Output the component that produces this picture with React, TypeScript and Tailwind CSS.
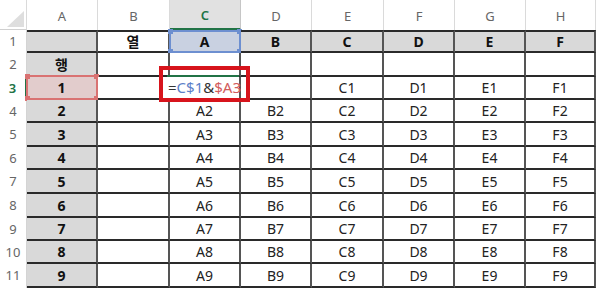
import React from "react";

const COLS = ["A", "B", "C", "D", "E", "F", "G", "H"];
const HEAD = ["열", "A", "B", "C", "D", "E", "F"];

type Cell = { text: string; bold?: boolean; gray?: boolean };

const buildRow = (r: number): Cell[] => {
  if (r === 1)
    return [
      { text: "", gray: true },
      { text: "열", bold: true },
      ...HEAD.slice(1).map((t) => ({ text: t, bold: true, gray: true })),
    ];
  if (r === 2)
    return [
      { text: "행", bold: true, gray: true },
      ...Array.from({ length: 7 }, () => ({ text: "" })),
    ];
  const n = r - 2;
  if (r === 3)
    return [
      { text: "1", bold: true, gray: true },
      { text: "" },
      { text: "" },
      { text: "" },
      { text: "C1" },
      { text: "D1" },
      { text: "E1" },
      { text: "F1" },
    ];
  return [
    { text: String(n), bold: true, gray: true },
    { text: "" },
    ...["A", "B", "C", "D", "E", "F"].map((c) => ({ text: c + n })),
  ];
};

const Handle = ({ pos, color }: { pos: string; color: string }) => (
  <span className={`absolute w-[5px] h-[5px] ${pos} ${color}`} />
);

const App = () => {
  const rows = Array.from({ length: 11 }, (_, i) => i + 1);

  return (
    <div className="relative w-[600px] h-[290px] bg-white overflow-hidden font-['Noto_Sans','Noto_Sans_CJK_KR',sans-serif] text-[14px] text-[#222]">
      <div className="grid grid-cols-[27px_71px_72px_71px_71px_72px_71px_71px_70px_1fr] grid-rows-[30px_23px_24px_23px_23px_24px_23px_24px_24px_23px_23px_24px]">
        {/* --- Column headers --- */}
        <div className="relative border-r border-[#dadada] border-b border-b-[#d0d0d0]">
          <svg className="absolute left-[7px] top-[11px]" width="17" height="16" viewBox="0 0 17 16">
            <polygon points="17,0 17,16 0,16" fill="#dedede" />
          </svg>
        </div>
        {COLS.map((c) => (
          <div
            key={c}
            className={
              c === "C"
                ? "flex items-center justify-center bg-[#e1e1e1] border-r border-[#c6c6c6] border-b-2 border-b-[#217346] text-[13px] text-[#217346] font-semibold pt-[3px]"
                : "flex items-center justify-center border-r border-[#dadada] text-[13px] text-[#666] pt-[3px]"
            }
          >
            {c}
          </div>
        ))}
        <div />

        {/* --- Rows --- */}
        {rows.map((r) => {
          const cells = buildRow(r);
          return (
            <React.Fragment key={r}>
              <div
                className={
                  r === 3
                    ? "flex items-center justify-center border-r-2 border-[#217346] text-[13px] text-[#217346] font-semibold"
                    : "flex items-center justify-center border-r border-[#d4d4d4] text-[13px] text-[#666]"
                }
              >
                {r}
              </div>
              {cells.map((cell, ci) => {
                const isC1 = r === 1 && ci === 2;
                const isA3 = r === 3 && ci === 0;
                const isC3 = r === 3 && ci === 2;
                let bg = cell.gray ? "bg-[#d9d9d9]" : "bg-white";
                if (isC1) bg = "bg-[#c9d1e1]";
                if (isA3) bg = "bg-[#e2cccc]";
                return (
                  <div
                    key={ci}
                    className={`relative flex items-center justify-center border-r-2 border-r-[#555] border-b-2 border-b-[#2a2a2a] ${
                      r === 1 ? "border-t-2 border-t-[#2a2a2a]" : ""
                    } ${bg} ${cell.bold ? "font-bold text-[#111]" : ""}`}
                  >
                    {cell.text}
                    {isC1 && (
                      <div className="absolute -left-px -top-[2px] -right-[2px] -bottom-[2px] border-2 border-[#6d8fd0]">
                        <Handle pos="-left-[3px] -top-[3px]" color="bg-[#6d8fd0]" />
                        <Handle pos="-right-[3px] -top-[3px]" color="bg-[#6d8fd0]" />
                        <Handle pos="-left-[3px] -bottom-[3px]" color="bg-[#6d8fd0]" />
                        <Handle pos="-right-[3px] -bottom-[3px]" color="bg-[#6d8fd0]" />
                      </div>
                    )}
                    {isA3 && (
                      <div className="absolute -left-px -top-[2px] -right-[2px] -bottom-[2px] border-2 border-[#d97272]">
                        <Handle pos="-left-[3px] -top-[3px]" color="bg-[#d97272]" />
                        <Handle pos="-right-[3px] -top-[3px]" color="bg-[#d97272]" />
                        <Handle pos="-left-[3px] -bottom-[3px]" color="bg-[#d97272]" />
                        <Handle pos="-right-[3px] -bottom-[3px]" color="bg-[#d97272]" />
                      </div>
                    )}
                    {isC3 && (
                      <div className="absolute -left-[3px] -top-[2px] right-0 -bottom-[2px] bg-white border-y-2 border-[#217346]">
                        <span className="absolute left-px top-[-1px] whitespace-nowrap text-[15px] text-[#333]">
                          =<span className="text-[#5b80c8]">C$1</span>&amp;
                          <span className="text-[#d25c5c]">$A3</span>
                        </span>
                      </div>
                    )}
                  </div>
                );
              })}
              <div />
            </React.Fragment>
          );
        })}
      </div>

      {/* annotation box */}
      <div className="absolute left-[159px] top-[66px] w-[91px] h-[36px] border-[4px] border-[#d7141c]" />
    </div>
  );
};

export default App;
